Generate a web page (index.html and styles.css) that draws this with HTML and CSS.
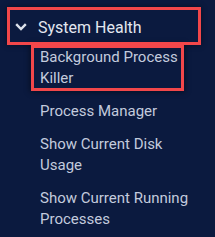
FILE: index.html
```html
<!DOCTYPE html>
<html lang="en">
<head>
    <meta charset="UTF-8">
    <title>System Health</title>
    <link rel="stylesheet" href="styles.css">
</head>
<body>

<div class="menu">
    <div class="group-head marked">
        <svg class="chevron" width="12" height="8" viewBox="0 0 12 8">
            <polyline points="1.2,1.2 6,6 10.8,1.2" fill="none" stroke="#dde2ec" stroke-width="2.4"/>
        </svg>
        <span>System Health</span>
    </div>
    <div class="sub-list">
        <div class="sub-item marked">Background Process Killer</div>
        <div class="sub-item">Process Manager</div>
        <div class="sub-item">Show Current Disk Usage</div>
        <div class="sub-item">Show Current Running Processes</div>
    </div>
</div>

</body>
</html>
```

FILE: styles.css
```css
body {
    margin: 0;
    background-color: #0b1a3f;
    font-family: Roboto, "Liberation Sans", sans-serif;
    color: #c3cbdd;
}
.menu {
    padding: 10px 0 0 10px;
}
.group-head {
    width: 188px;
    height: 32px;
    display: flex;
    align-items: center;
    gap: 11px;
    padding: 2px 0 0 5px;
    box-sizing: border-box;
    font-size: 16px;
    color: #e3e7ef;
}
.chevron {
    flex: none;
}
.marked {
    outline: 3px solid #f2474a;
    box-shadow: 0 0 6px 3px rgba(0, 0, 0, 0.45);
}
.sub-list {
    margin: 5px 0 0 23px;
    width: 167px;
}
.sub-item {
    padding-left: 7px;
    font-size: 15px;
    line-height: 21px;
    margin-bottom: 12px;
}
.sub-item.marked {
    width: 149px;
    box-sizing: border-box;
    outline-offset: -1px;
}
```
